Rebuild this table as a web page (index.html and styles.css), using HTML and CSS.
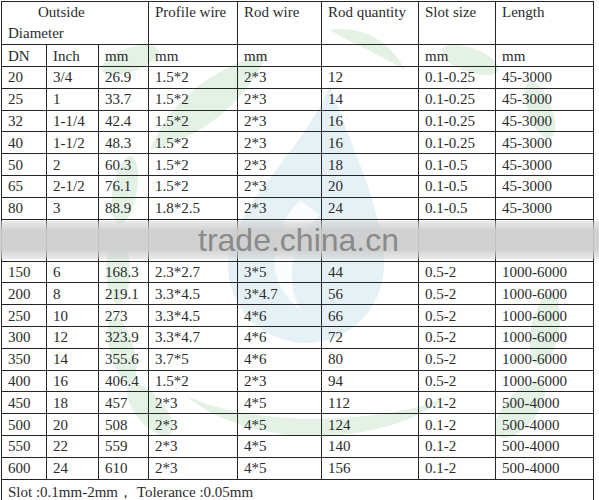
FILE: index.html
```html
<!DOCTYPE html>
<html>
<head>
<meta charset="utf-8">
<link rel="stylesheet" href="styles.css">
</head>
<body>
<div class="page">
  <svg class="mark" viewBox="0 0 599 500" xmlns="http://www.w3.org/2000/svg">
    <g fill="#cfe9d2">
      <path d="M150,150 C170,100 210,70 268,52 C250,95 210,135 150,150 Z"/>
      <path d="M330,30 C360,25 390,40 405,70 C380,55 355,45 330,30 Z"/>
      <ellipse cx="130" cy="60" rx="30" ry="12" transform="rotate(-20 130 60)"/>
      <ellipse cx="125" cy="190" rx="12" ry="34" transform="rotate(10 125 190)"/>
      <ellipse cx="118" cy="270" rx="12" ry="34" transform="rotate(0 118 270)"/>
      <ellipse cx="122" cy="350" rx="12" ry="34" transform="rotate(-15 122 350)"/>
      <ellipse cx="150" cy="410" rx="14" ry="32" transform="rotate(-40 150 410)"/>
      <ellipse cx="470" cy="60" rx="30" ry="12" transform="rotate(20 470 60)"/>
      <ellipse cx="540" cy="110" rx="12" ry="30" transform="rotate(-20 540 110)"/>
      <ellipse cx="545" cy="330" rx="14" ry="36" transform="rotate(10 545 330)"/>
      <ellipse cx="520" cy="410" rx="16" ry="34" transform="rotate(40 520 410)"/>
      <path d="M185,395 C250,450 380,450 450,395 C390,425 250,428 185,395 Z"/>
    </g>
    <g>
      <path d="M330,85 C305,150 228,210 228,265 A77,77 0 0 0 384,265 C384,210 352,150 330,85 Z" fill="#d3e7f0"/>
      <path d="M300,200 C270,230 262,280 300,310 C285,280 290,240 320,215 Z" fill="#ffffff" opacity="0.8"/>
    </g>
  </svg>
  <table class="spec">
    <colgroup>
      <col class="w1"><col class="w2"><col class="w3"><col class="w4"><col class="w5"><col class="w6"><col class="w7"><col class="w8">
    </colgroup>
    <tr class="h1">
      <td colspan="3"><span class="indent">Outside</span><br>Diameter</td>
      <td>Profile wire</td><td>Rod wire</td><td>Rod quantity</td><td>Slot size</td><td>Length</td>
    </tr>
    <tr class="h2"><td>DN</td><td>Inch</td><td>mm</td><td>mm</td><td>mm</td><td></td><td>mm</td><td>mm</td></tr>
    <tr class="r"><td>20</td><td>3/4</td><td>26.9</td><td>1.5*2</td><td>2*3</td><td>12</td><td>0.1-0.25</td><td>45-3000</td></tr>
    <tr class="r"><td>25</td><td>1</td><td>33.7</td><td>1.5*2</td><td>2*3</td><td>14</td><td>0.1-0.25</td><td>45-3000</td></tr>
    <tr class="r"><td>32</td><td>1-1/4</td><td>42.4</td><td>1.5*2</td><td>2*3</td><td>16</td><td>0.1-0.25</td><td>45-3000</td></tr>
    <tr class="r"><td>40</td><td>1-1/2</td><td>48.3</td><td>1.5*2</td><td>2*3</td><td>16</td><td>0.1-0.25</td><td>45-3000</td></tr>
    <tr class="r"><td>50</td><td>2</td><td>60.3</td><td>1.5*2</td><td>2*3</td><td>18</td><td>0.1-0.5</td><td>45-3000</td></tr>
    <tr class="r"><td>65</td><td>2-1/2</td><td>76.1</td><td>1.5*2</td><td>2*3</td><td>20</td><td>0.1-0.5</td><td>45-3000</td></tr>
    <tr class="r"><td>80</td><td>3</td><td>88.9</td><td>1.8*2.5</td><td>2*3</td><td>24</td><td>0.1-0.5</td><td>45-3000</td></tr>
    <tr class="gap"><td></td><td></td><td></td><td></td><td></td><td></td><td></td><td></td></tr>
    <tr class="r"><td>150</td><td>6</td><td>168.3</td><td>2.3*2.7</td><td>3*5</td><td>44</td><td>0.5-2</td><td>1000-6000</td></tr>
    <tr class="r"><td>200</td><td>8</td><td>219.1</td><td>3.3*4.5</td><td>3*4.7</td><td>56</td><td>0.5-2</td><td>1000-6000</td></tr>
    <tr class="r"><td>250</td><td>10</td><td>273</td><td>3.3*4.5</td><td>4*6</td><td>66</td><td>0.5-2</td><td>1000-6000</td></tr>
    <tr class="r"><td>300</td><td>12</td><td>323.9</td><td>3.3*4.7</td><td>4*6</td><td>72</td><td>0.5-2</td><td>1000-6000</td></tr>
    <tr class="r"><td>350</td><td>14</td><td>355.6</td><td>3.7*5</td><td>4*6</td><td>80</td><td>0.5-2</td><td>1000-6000</td></tr>
    <tr class="r"><td>400</td><td>16</td><td>406.4</td><td>1.5*2</td><td>2*3</td><td>94</td><td>0.5-2</td><td>1000-6000</td></tr>
    <tr class="r"><td>450</td><td>18</td><td>457</td><td>2*3</td><td>4*5</td><td>112</td><td>0.1-2</td><td>500-4000</td></tr>
    <tr class="r"><td>500</td><td>20</td><td>508</td><td>2*3</td><td>4*5</td><td>124</td><td>0.1-2</td><td>500-4000</td></tr>
    <tr class="r"><td>550</td><td>22</td><td>559</td><td>2*3</td><td>4*5</td><td>140</td><td>0.1-2</td><td>500-4000</td></tr>
    <tr class="r"><td>600</td><td>24</td><td>610</td><td>2*3</td><td>4*5</td><td>156</td><td>0.1-2</td><td>500-4000</td></tr>
    <tr class="foot"><td colspan="8">Slot :0.1mm-2mm，&nbsp;Tolerance :0.05mm</td></tr>
  </table>
  <div class="band"><span class="brand">trade.china.cn</span></div>
</div>
</body>
</html>
```
FILE: styles.css
```css
html, body {
  margin: 0;
  padding: 0;
  background: #ffffff;
}
.page {
  position: relative;
  width: 599px;
  height: 500px;
  overflow: hidden;
  font-family: "Liberation Serif", "Times New Roman", serif;
  font-size: 15px;
  color: #2b2b2b;
}
.mark {
  position: absolute;
  left: 0;
  top: 0;
  width: 599px;
  height: 500px;
  z-index: 0;
  opacity: 0.55;
}
.spec {
  position: relative;
  z-index: 1;
  border-collapse: collapse;
  table-layout: fixed;
  width: 593px;
  margin: 1px 0 0 1px;
}
.w1 { width: 45px; }
.w2 { width: 52px; }
.w3 { width: 50px; }
.w4 { width: 89px; }
.w5 { width: 84px; }
.w6 { width: 97px; }
.w7 { width: 77px; }
.w8 { width: 98px; }
.spec td {
  border: 1px solid #262626;
  padding: 0 0 0 6px;
  line-height: 20px;
  vertical-align: middle;
  white-space: nowrap;
  overflow: hidden;
}
.h1 { height: 42px; }
.h1 td { vertical-align: top; line-height: 21px; }
.indent { padding-left: 30px; }
.h2 { height: 22px; }
.r { height: 21.8px; }
.gap { height: 42px; }
.foot { height: 30px; }
.foot td { vertical-align: top; line-height: 24px; }
.band {
  position: absolute;
  left: 0;
  top: 221px;
  width: 599px;
  height: 38px;
  z-index: 2;
  background: linear-gradient(to bottom, rgba(205,205,205,0.4), rgba(205,205,205,0.92) 25%, rgba(205,205,205,0.92) 75%, rgba(205,205,205,0.4));
  display: flex;
  align-items: center;
}
.brand {
  margin-left: 198px;
  font-family: "Liberation Sans", Arial, sans-serif;
  font-size: 32px;
  color: #8a8a8a;
  line-height: 38px;
}
```
